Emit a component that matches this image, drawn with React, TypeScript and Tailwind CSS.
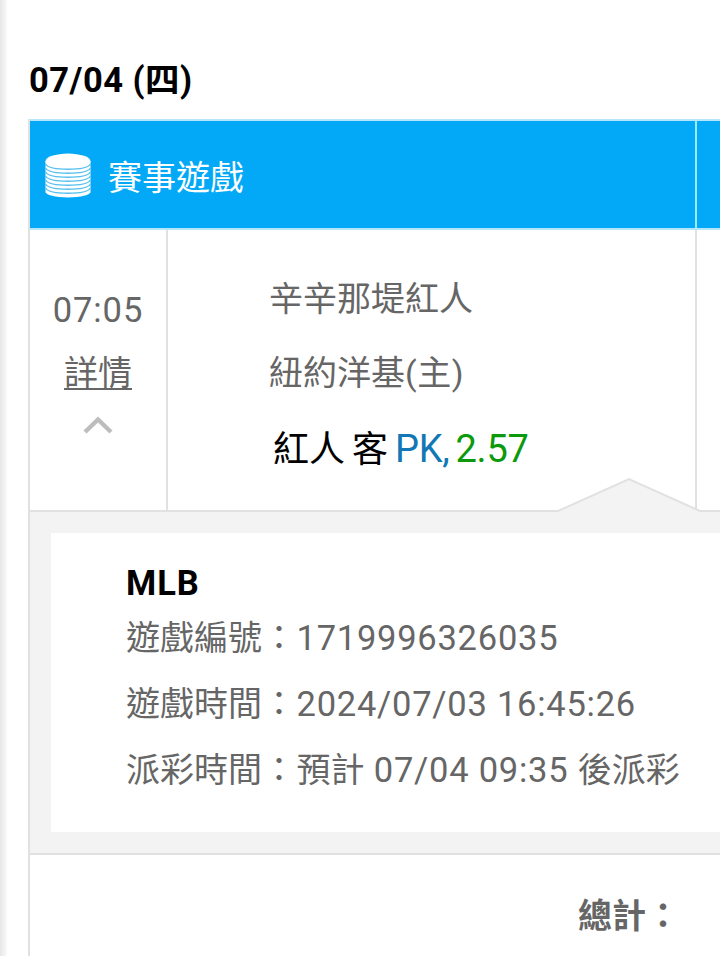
import type { ReactNode } from "react";

const details = [
  { label: "遊戲編號", value: <Num>1719996326035</Num> },
  { label: "遊戲時間", value: <Num>2024/07/03 16:45:26</Num> },
  {
    label: "派彩時間",
    value: (
      <>
        預計<Num> 07/04 09:35 </Num>後派彩
      </>
    ),
  },
];

function Num({ children }: { children: ReactNode }) {
  return <span className="text-[34.5px] leading-none tracking-[0.75px]">{children}</span>;
}

function CoinsIcon() {
  const layers = [0, 1, 2, 3, 4, 5, 6];
  return (
    <svg width="46" height="46" viewBox="0 0 46 46" className="shrink-0">
      <path d="M0.5 8v31c0 3 10 5.4 22.5 5.4s22.5-2.4 22.5-5.4V8z" fill="#fff" />
      <ellipse cx="23" cy="8" rx="22.5" ry="7.4" fill="#fff" />
      {layers.map((i) => (
        <path
          key={i}
          d="M0.5 11c2 3.2 10 5.2 22.5 5.2S43.5 14.2 45.5 11"
          transform={`translate(0 ${i * 4})`}
          fill="none"
          stroke="#55c0ee"
          strokeWidth="1.4"
        />
      ))}
    </svg>
  );
}

function TableHeader() {
  return (
    <div className="flex h-[111px] border-y-2 border-[#b5e6fb] bg-[#03a9f6] text-white">
      <div className="flex w-[667px] shrink-0 items-center border-r-2 border-[#9deaf8] pt-[3px] pl-[15px]">
        <CoinsIcon />
        <span className="ml-[17px] pt-1">賽事遊戲</span>
      </div>
    </div>
  );
}

function MatchRow() {
  return (
    <div className="flex h-[280px]">
      <div className="flex w-[138px] shrink-0 flex-col items-center border-r-2 border-[#e1e1e1] pt-[48px] leading-[64px]">
        <span className="text-[34.5px] tracking-[0.9px]">07:05</span>
        <span className="-mt-px underline decoration-2 underline-offset-[3px]">詳情</span>
        <svg width="30" height="18" viewBox="0 0 30 18" className="mt-[11px]">
          <path d="M2 16 15 3.5 28 16" fill="none" stroke="#bdbdbd" strokeWidth="4.4" />
        </svg>
      </div>
      <div className="w-[529px] shrink-0 border-r-2 border-[#e1e1e1] pt-[32px] pl-[101px] leading-[74px]">
        <p>辛辛那堤紅人</p>
        <p>
          紐約洋基<span className="tracking-[0.5px]">(主)</span>
        </p>
        <p className="flex items-baseline pl-1 text-[36px] leading-[78px] text-black">
          <span>紅人</span>
          <span className="ml-[7px]">客</span>
          <span className="ml-[7px] text-[38px] tracking-[-0.3px] text-[#1277b5]">PK,</span>
          <span className="ml-[6px] text-[38px] tracking-[-0.2px] text-[#0b9a0b]">2.57</span>
        </p>
      </div>
    </div>
  );
}

function DetailPanel() {
  return (
    <div className="relative h-[345px] border-y-2 border-[#e1e1e1] bg-[#f3f3f3] pt-[21px] pl-[21px]">
      <svg width="150" height="37" viewBox="0 0 150 37" className="absolute -top-[35px] left-[524px]">
        <path d="M0 37V34L4 33.5 75 2 146 33.5 150 34V37z" fill="#f3f3f3" />
        <path d="M0 34h4L75 2l71 32h4" fill="none" stroke="#e1e1e1" strokeWidth="2" />
      </svg>
      <div className="h-[299px] bg-white pt-[20px] pl-[75px]">
        <h3 className="text-[34.5px] leading-[60px] font-bold tracking-[1px] text-black">MLB</h3>
        <dl className="-mt-2 leading-[66px]">
          {details.map((d) => (
            <div key={d.label} className="flex items-baseline whitespace-pre">
              <dt className="w-[170.5px]">{d.label}：</dt>
              <dd>{d.value}</dd>
            </div>
          ))}
        </dl>
      </div>
    </div>
  );
}

export default function App() {
  return (
    <div className="flex h-[956px] w-[720px] overflow-hidden bg-white font-[Roboto,'Noto_Sans_CJK_TC',sans-serif] text-[34px] text-[#666]">
      <div className="w-[7px] shrink-0 bg-linear-to-r from-[#e6e6e6] to-[#fafafa]" />
      <main className="w-[713px] shrink-0 overflow-hidden pt-[49px] pl-[21px]">
        <h2 className="h-[70px] pt-px pl-px text-[34.5px] leading-[60px] font-bold tracking-[0.5px] text-black">07/04 (四)</h2>
        <section className="h-[900px] border-l-2 border-[#e1e1e1]">
          <TableHeader />
          <MatchRow />
          <DetailPanel />
          <div className="pl-[548px] leading-[123px] font-bold">總計：</div>
        </section>
      </main>
    </div>
  );
}
